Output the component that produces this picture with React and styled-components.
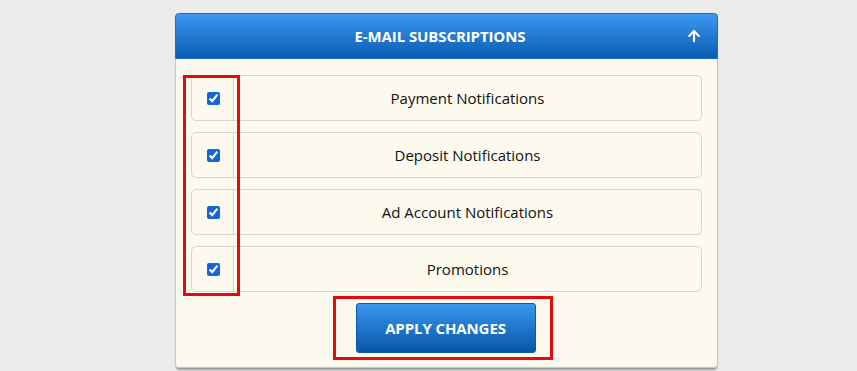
import React, { useState } from 'react'
import styled, { createGlobalStyle } from 'styled-components'
import { FaArrowUp } from 'react-icons/fa'

const items = [
    'Payment Notifications',
    'Deposit Notifications',
    'Ad Account Notifications',
    'Promotions',
]

const App = () => {
    const [checked, setChecked] = useState(items.map(() => true))
    return (
        <>
            <GlobalStyle />
            <Page>
                <Panel>
                    <Header>
                        <Title>E-MAIL SUBSCRIPTIONS</Title>
                        <Toggle><FaArrowUp size={14} /></Toggle>
                    </Header>
                    <Body>
                        {items.map((label, i) => (
                            <Row key={label}>
                                <CheckCell>
                                    <input
                                        type="checkbox"
                                        checked={checked[i]}
                                        onChange={() => {
                                            const next = [...checked]
                                            next[i] = !next[i]
                                            setChecked(next)
                                        }}
                                    />
                                </CheckCell>
                                <Label>{label}</Label>
                            </Row>
                        ))}
                        <Footer>
                            <ApplyButton>APPLY CHANGES</ApplyButton>
                        </Footer>
                        <Mark $left={7} $top={16} $width={57} $height={221} />
                        <Mark $left={157} $top={237} $width={220} $height={64} />
                    </Body>
                </Panel>
            </Page>
        </>
    )
}

const GlobalStyle = createGlobalStyle`
    body{
        margin: 0;
        background: #ebebeb;
        font-family: "Open Sans", "Liberation Sans", sans-serif;
    }
`

const Page = styled.div`
    padding: 13px 0 0 175px;
    height: 358px;
    overflow: hidden;
`

const Panel = styled.div`
    width: 541px;
    border: 1px solid #c9c7bd;
    border-top: none;
    border-radius: 4px;
    background: #fcfaee;
    box-shadow: 0 3px 2px -1px #9a9a9a;
`

const Header = styled.div`
    height: 44px;
    display: flex;
    align-items: center;
    justify-content: center;
    padding-right: 13px;
    position: relative;
    border-radius: 4px 4px 0 0;
    background: linear-gradient(#3c98f2, #0a5bb0);
    border: 1px solid #1c6fc8;
    margin: 0 -1px;
    color: white;
`

const Title = styled.div`
    font-weight: bold;
    font-size: 15px;
    letter-spacing: -0.1px;
`

const Toggle = styled.div`
    position: absolute;
    right: 16px;
    top: 15px;
    display: flex;
`

const Body = styled.div`
    position: relative;
    padding: 16px 15px 14px 15px;
    display: flex;
    flex-direction: column;
    gap: 11px;
`

const Row = styled.div`
    height: 44px;
    display: flex;
    border: 1px solid #d8d5ca;
    border-radius: 5px;
`

const CheckCell = styled.div`
    width: 41px;
    border-right: 1px solid #d8d5ca;
    display: flex;
    align-items: center;
    justify-content: center;
    input{
        margin: 0 0 0 1px;
        width: 13px;
        height: 13px;
        accent-color: #1565d8;
    }
`

const Label = styled.div`
    flex: 1;
    display: flex;
    align-items: center;
    justify-content: center;
    font-size: 15px;
    color: #111;
`

const Footer = styled.div`
    display: flex;
    justify-content: center;
    padding-right: 2px;
`

const ApplyButton = styled.button`
    width: 180px;
    height: 50px;
    border: 1px solid #0a58a8;
    border-radius: 3px;
    background: linear-gradient(#3a97ef, #0656a8);
    color: white;
    font-family: inherit;
    font-weight: bold;
    font-size: 15px;
    letter-spacing: -0.1px;
`

const Mark = styled.div`
    position: absolute;
    left: ${p => p.$left}px;
    top: ${p => p.$top}px;
    width: ${p => p.$width}px;
    height: ${p => p.$height}px;
    border: 3px solid #e30b0b;
    box-sizing: border-box;
    pointer-events: none;
`

export default App
